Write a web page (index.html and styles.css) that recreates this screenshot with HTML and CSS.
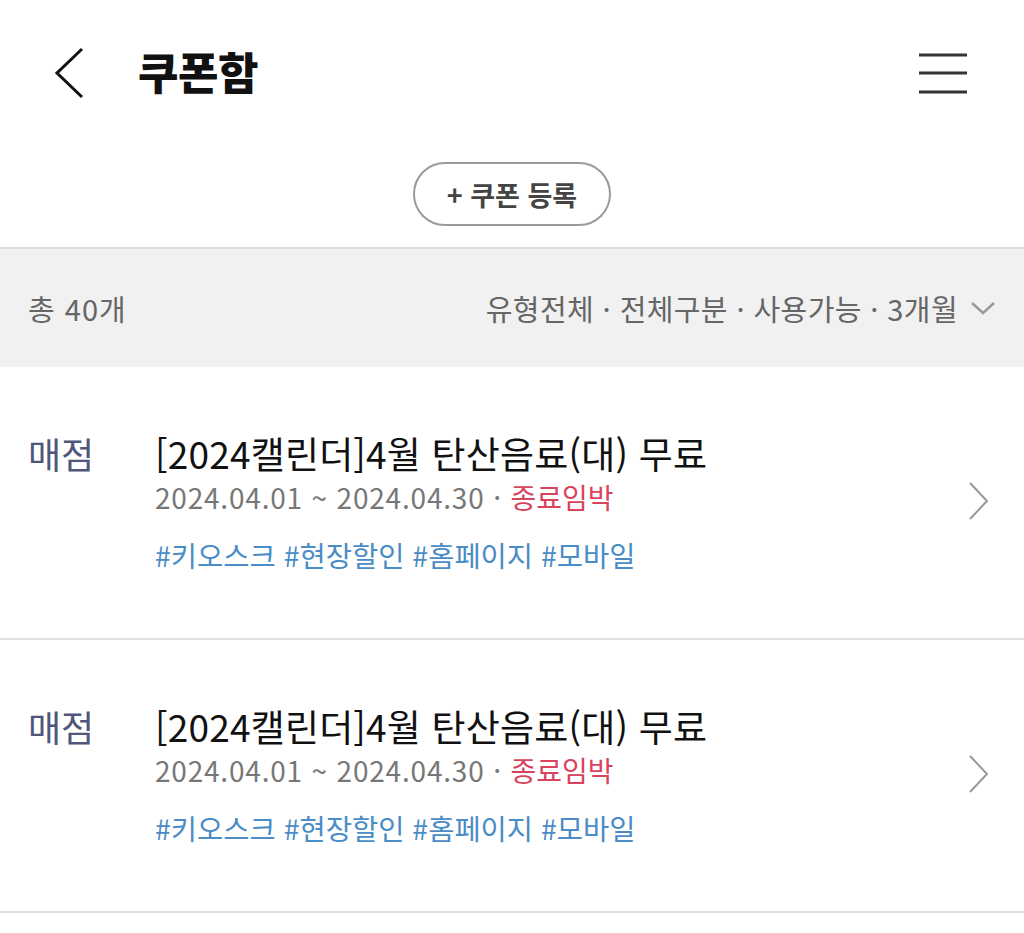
FILE: index.html
```html
<!DOCTYPE html>
<html lang="ko">
<head>
  <meta charset="UTF-8" />
  <title>쿠폰함</title>
  <meta name="viewport" content="width=device-width, initial-scale=1.0" />
  <link rel="stylesheet" href="styles.css">
</head>
<body>
  <header class="top-bar">
    <a href="#" class="back-btn" title="뒤로">
      <svg width="32" height="52" viewBox="0 0 32 52"><polyline points="28,2 3,26 28,50" fill="none" stroke="#111" stroke-width="3"/></svg>
    </a>
    <h1>쿠폰함</h1>
    <button class="menu-btn" title="메뉴">
      <svg width="50" height="44" viewBox="0 0 50 44"><path d="M1 4H49M1 22H49M1 41H49" stroke="#333" stroke-width="3"/></svg>
    </button>
  </header>

  <div class="register">
    <button class="register-btn">+ 쿠폰 등록</button>
  </div>

  <div class="filter-bar">
    <span class="count">총 40개</span>
    <span class="filters">유형전체 · 전체구분 · 사용가능 · 3개월
      <svg width="26" height="16" viewBox="0 0 26 16"><polyline points="2,3 13,13 24,3" fill="none" stroke="#999" stroke-width="2.5"/></svg>
    </span>
  </div>

  <ul class="coupon-list">
    <li class="coupon">
      <div class="coupon-cat">매점</div>
      <div class="coupon-body">
        <div class="coupon-title">[2024캘린더]4월 탄산음료(대) 무료</div>
        <div class="coupon-date">2024.04.01 ~ 2024.04.30 · <span class="urgent">종료임박</span></div>
        <div class="coupon-tags">#키오스크 #현장할인 #홈페이지 #모바일</div>
      </div>
      <svg class="coupon-arrow" width="22" height="40" viewBox="0 0 22 40"><polyline points="2,2 19,20 2,38" fill="none" stroke="#999" stroke-width="2"/></svg>
    </li>
    <li class="coupon">
      <div class="coupon-cat">매점</div>
      <div class="coupon-body">
        <div class="coupon-title">[2024캘린더]4월 탄산음료(대) 무료</div>
        <div class="coupon-date">2024.04.01 ~ 2024.04.30 · <span class="urgent">종료임박</span></div>
        <div class="coupon-tags">#키오스크 #현장할인 #홈페이지 #모바일</div>
      </div>
      <svg class="coupon-arrow" width="22" height="40" viewBox="0 0 22 40"><polyline points="2,2 19,20 2,38" fill="none" stroke="#999" stroke-width="2"/></svg>
    </li>
  </ul>
</body>
</html>
```

FILE: styles.css
```css
body {
  margin: 0;
  padding: 0;
  background: #fff;
  color: #111;
  font-family: "Noto Sans CJK KR", "Noto Sans", sans-serif;
}
.top-bar {
  height: 146px;
  display: flex;
  align-items: center;
  padding: 0 56px 0 54px;
}
.back-btn {
  display: flex;
  width: 32px;
  margin-right: 52px;
}
.top-bar h1 {
  flex: 1;
  margin: 0 0 4px;
  font-size: 44px;
  font-weight: 900;
  line-height: 1;
  letter-spacing: -0.5px;
}
.menu-btn {
  border: none;
  background: none;
  padding: 0;
  display: flex;
}
.register {
  display: flex;
  justify-content: center;
  padding: 16px 0 21px;
}
.register-btn {
  width: 198px;
  height: 64px;
  border: 2px solid #9a9a9a;
  border-radius: 32px;
  background: #fff;
  color: #444;
  font-family: inherit;
  font-size: 27px;
  font-weight: 700;
  line-height: 1;
}
.filter-bar {
  height: 118px;
  border-top: 2px solid #dedede;
  background: #f1f1f1;
  display: flex;
  align-items: center;
  justify-content: space-between;
  padding: 0 28px;
  font-size: 29px;
  letter-spacing: 0.4px;
  color: #666;
}
.count {
  letter-spacing: 1px;
}
.filters {
  display: flex;
  align-items: center;
  gap: 12px;
}
.coupon-list {
  list-style: none;
  margin: 0;
  padding: 0;
}
.coupon {
  display: flex;
  align-items: flex-start;
  padding: 62px 34px 63px 28px;
  border-bottom: 2px solid #e0e0e0;
}
.coupon-cat {
  width: 127px;
  flex-shrink: 0;
  font-size: 36px;
  line-height: 48px;
  color: #4f5679;
}
.coupon-body {
  flex: 1;
}
.coupon-title {
  font-size: 37px;
  line-height: 48px;
  letter-spacing: 0.2px;
  color: #111;
}
.coupon-date {
  font-size: 28px;
  line-height: 40px;
  letter-spacing: 0.8px;
  color: #777;
}
.urgent {
  color: #d8445e;
  letter-spacing: 0;
}
.coupon-tags {
  margin-top: 18px;
  font-size: 28.5px;
  line-height: 40px;
  color: #4a8cc6;
}
.coupon-arrow {
  align-self: center;
  margin-top: -2px;
}
```
